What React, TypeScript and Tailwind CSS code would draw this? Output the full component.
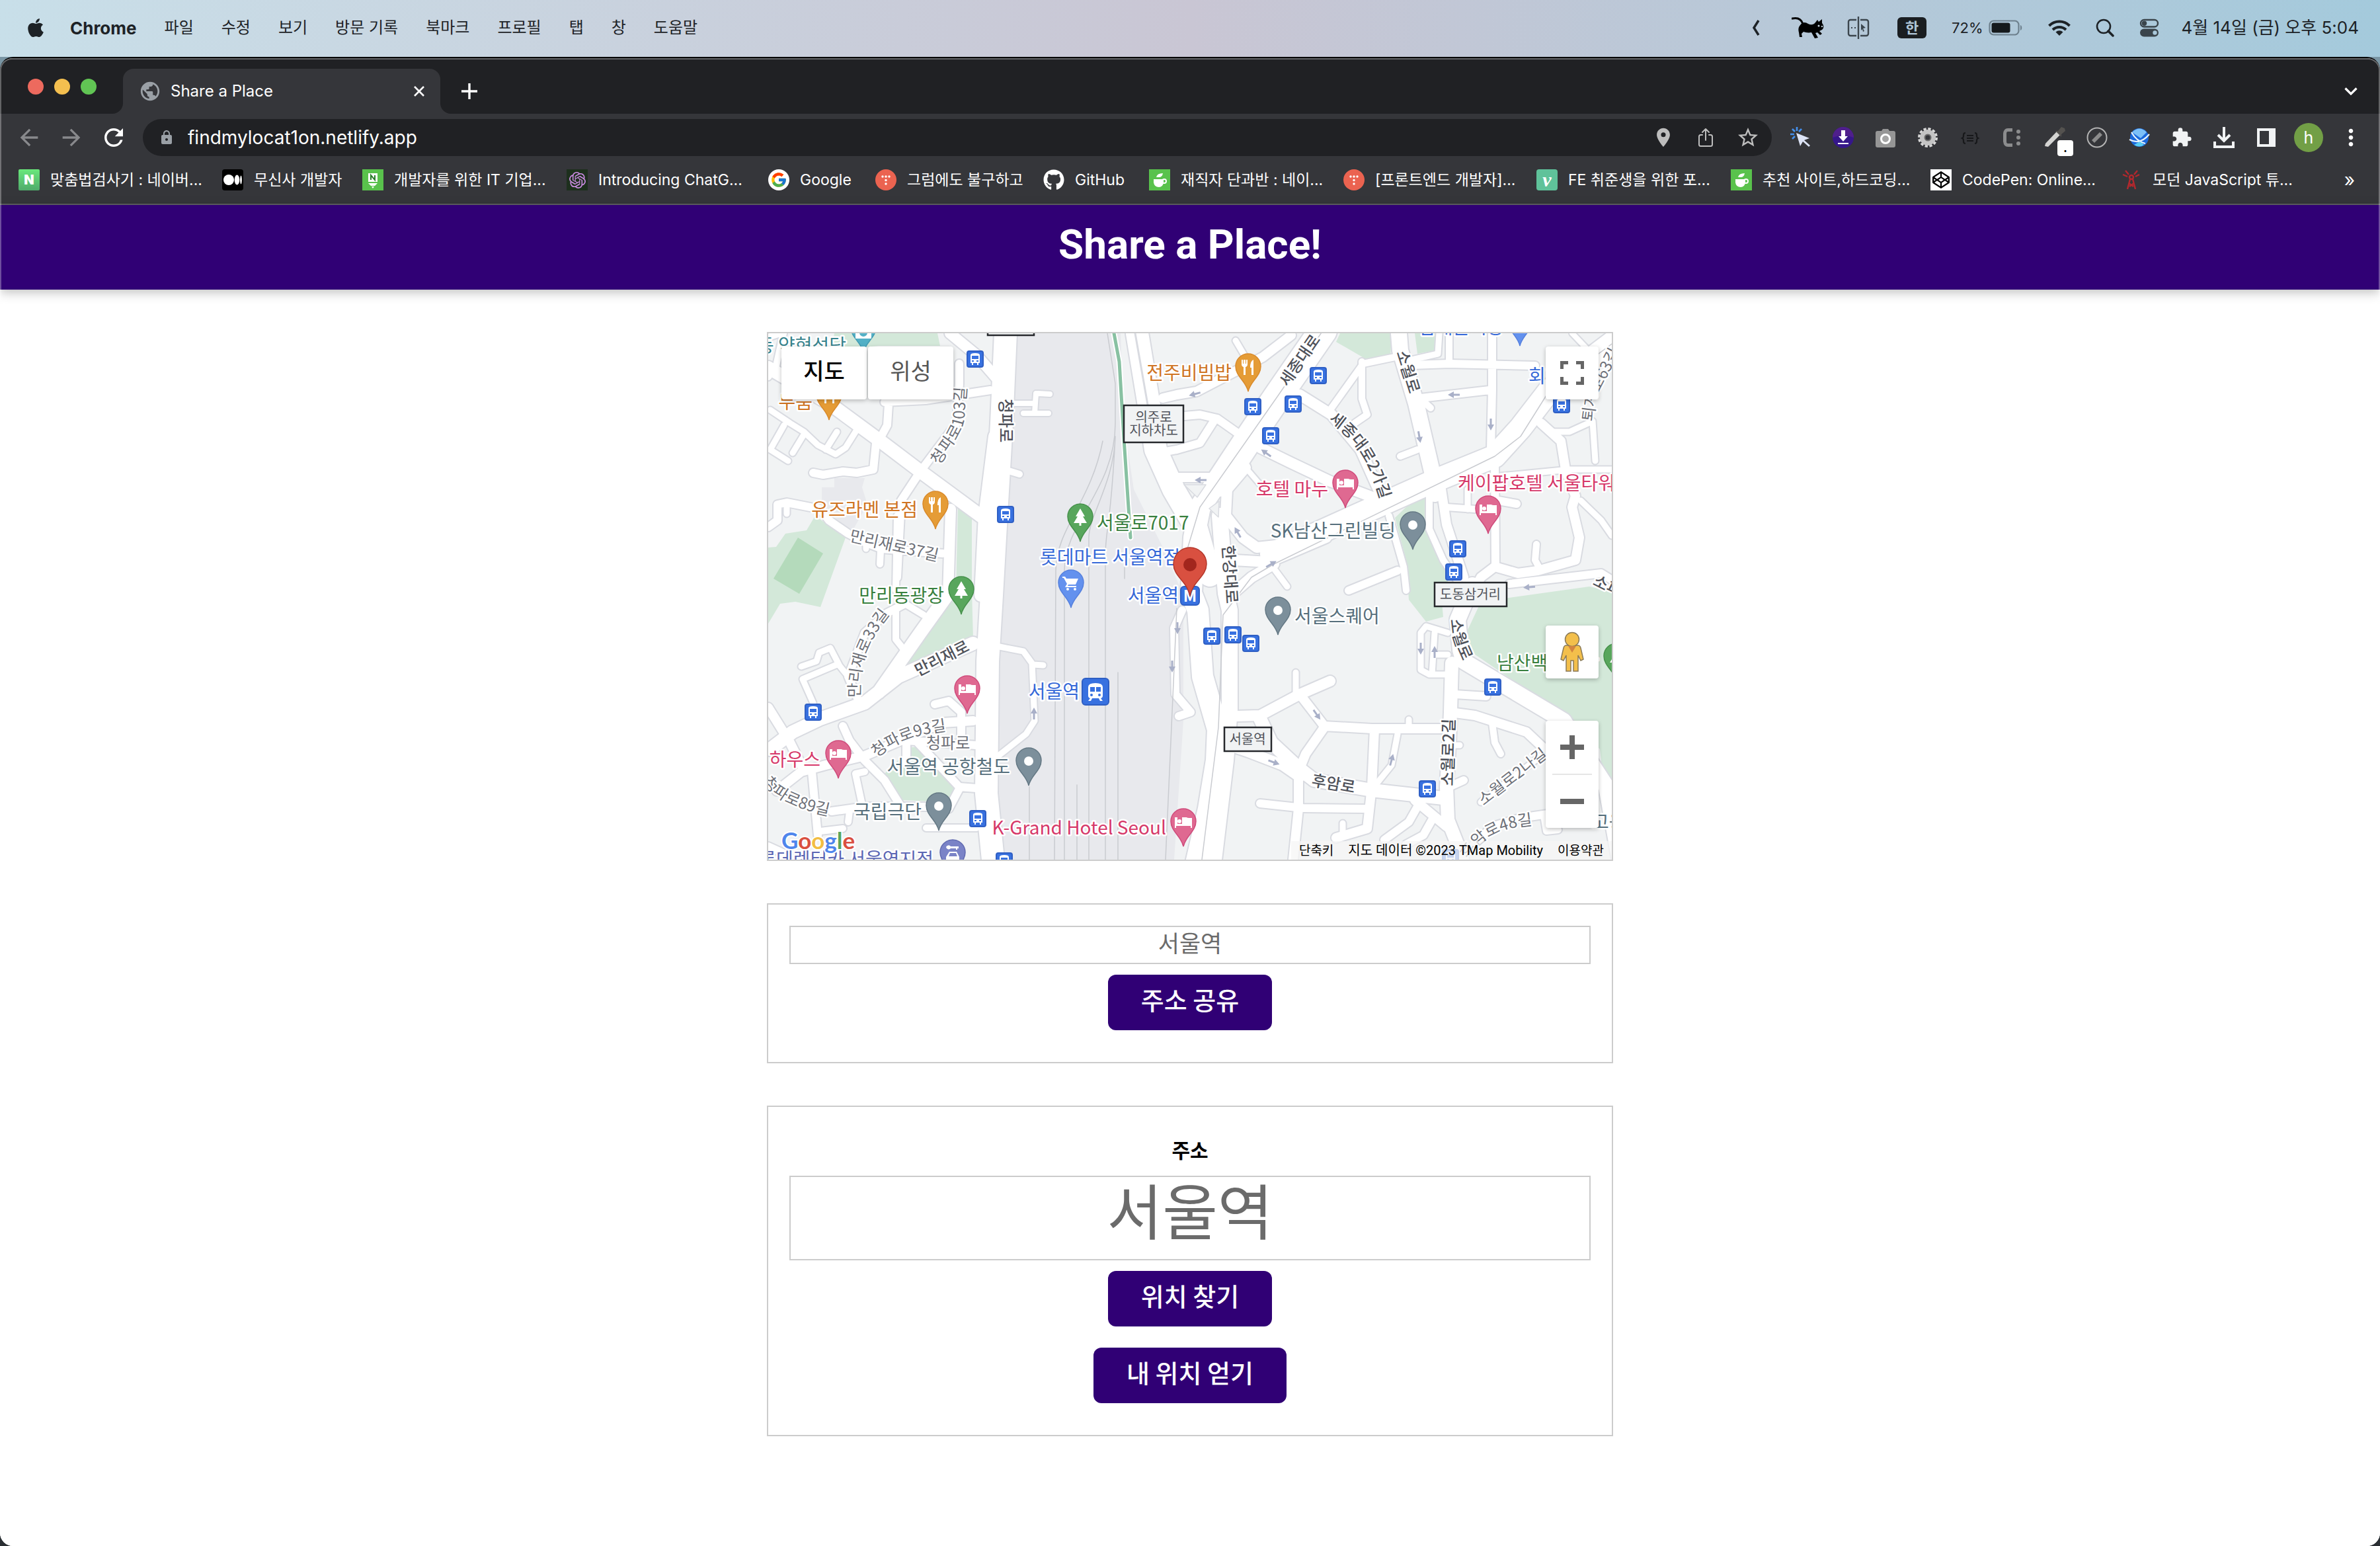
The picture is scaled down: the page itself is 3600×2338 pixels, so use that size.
import { ReactNode, useState } from "react";
import { FaApple, FaCodepen, FaGithub } from "react-icons/fa";
import { FcGoogle } from "react-icons/fc";
import { SiOpenai } from "react-icons/si";
import { IoShareOutline } from "react-icons/io5";
import {
  MdArrowBack,
  MdArrowForward,
  MdExtension,
  MdLocationOn,
  MdLock,
  MdMoreVert,
  MdPublic,
  MdRefresh,
  MdStarBorder,
} from "react-icons/md";

const MENUS = ["파일", "수정", "보기", "방문 기록", "북마크", "프로필", "탭", "창", "도움말"];

function MenuBar() {
  return (
    <header className="flex h-[86px] shrink-0 items-center justify-between bg-linear-to-r from-[#c8dfe9] via-[#c9c6d4] via-50% to-[#a4cadc] pr-[32px] pb-[2px] pl-[38px] text-[24px] text-[#1d2226]">
      <nav className="flex items-center gap-[42px]">
        <FaApple className="size-[32px]" />
        <span className="-ml-[6px] text-[26px] font-bold">Chrome</span>
        {MENUS.map((menu) => (
          <button key={menu} className="whitespace-nowrap">
            {menu}
          </button>
        ))}
      </nav>
      <div className="flex items-center">
        <svg className="h-[24px] w-[12px]" viewBox="0 0 12 24" fill="none" stroke="currentColor" strokeWidth="3.5">
          <path d="M10 1 3 12l7 11" />
        </svg>
        <CatIcon />
        <svg className="ml-[34px] h-[36px] w-[34px]" viewBox="0 0 34 36" fill="none" stroke="#3c464e" strokeWidth="2.4">
          <path d="M14 6H5a3 3 0 0 0-3 3v18a3 3 0 0 0 3 3h9M20 6h9a3 3 0 0 1 3 3v18a3 3 0 0 1-3 3h-9M17 1v34" />
          <path d="M21 12l7 6-4 1 2 4-2 1-1-4-2 2zM6 17h2v2H6zM11 17h2v2h-2z" fill="#3c464e" strokeWidth="0" />
        </svg>
        <span className="ml-[42px] flex h-[32px] w-[44px] items-center justify-center rounded-[6px] bg-[#1a1e21] text-[22px] leading-none font-bold text-[#b0c6d8]">
          한
        </span>
        <span className="ml-[38px] text-[22px]">72%</span>
        <svg className="ml-[8px] h-[26px] w-[52px]" viewBox="0 0 52 26">
          <rect x="1.5" y="2.5" width="44" height="21" rx="6" fill="none" stroke="#6d808d" strokeWidth="2.2" />
          <rect x="4.5" y="5.5" width="28" height="15" rx="3" fill="#15191c" />
          <path d="M48 9c3 1 3 7 0 8z" fill="#6d808d" />
        </svg>
        <svg className="ml-[38px] h-[26px] w-[34px]" viewBox="0 0 34 26" fill="none" stroke="currentColor" strokeWidth="4">
          <path d="M1.5 10a22 22 0 0 1 31 0M7 16a14.500 14.500 0 0 1 20 0" />
          <path d="M17 25l-5.500-5.500a8 8 0 0 1 11 0z" fill="currentColor" strokeWidth="0" />
        </svg>
        <svg className="ml-[38px] size-[28px]" viewBox="0 0 28 28" fill="none" stroke="currentColor" strokeWidth="2.6" strokeLinecap="round">
          <circle cx="12" cy="12" r="10" />
          <path d="M19 19l7 7" strokeWidth="3.5" />
        </svg>
        <svg className="ml-[38px] h-[28px] w-[30px]" viewBox="0 0 30 28" fill="none" stroke="#3a444b" strokeWidth="2.4">
          <rect x="2" y="2" width="26" height="10.5" rx="5.2" />
          <circle cx="7.5" cy="7.2" r="2.6" fill="#3a444b" />
          <rect x="1" y="15.5" width="28" height="12" rx="6" fill="#3a444b" strokeWidth="0" />
          <circle cx="23.5" cy="21.5" r="3.2" fill="#a9c8da" strokeWidth="0" />
        </svg>
        <span className="ml-[34px] text-[26px] leading-none whitespace-nowrap">4월 14일 (금) 오후 5:04</span>
      </div>
    </header>
  );
}

function CatIcon() {
  return (
    <svg className="ml-[48px] h-[34px] w-[50px]" viewBox="0 0 50 34">
      <path d="M1 3C10 1 15 5 17 11" fill="none" stroke="#000" strokeWidth="3" strokeLinecap="round" />
      <path d="M13 13c3-5 8-5 12-2 4 2 8 2 11-2l3-4 2 3 5-4v6c3 3 3 8 0 10l-4 2 4 4-3 2-4-4-3 1 4 7-5 1-5-9c-5 1-9 0-12-1l-3 3 1 5h-4l-1-7c-1-4-1-8 2-11z" fill="#000" />
      <circle cx="41" cy="14" r="1.5" fill="#c4d4e0" />
      <circle cx="46" cy="15" r="1.2" fill="#c4d4e0" />
    </svg>
  );
}

function TabStrip() {
  return (
    <div className="flex h-[82px] items-end bg-[#202124]">
      <div className="flex h-[82px] w-[186px] items-center gap-[16px] pl-[42px]">
        <button aria-label="닫기" className="size-[24px] rounded-full bg-[#ed6a5e]" />
        <button aria-label="최소화" className="size-[24px] rounded-full bg-[#f4bf4f]" />
        <button aria-label="확대" className="size-[24px] rounded-full bg-[#61c554]" />
      </div>
      <div className="relative flex h-[68px] w-[480px] items-center rounded-t-[16px] bg-[#35363a] pr-[24px] pl-[24px] text-white">
        <svg className="absolute bottom-0 -left-[16px] size-[16px]" viewBox="0 0 16 16" fill="#35363a">
          <path d="M16 0v16H0A16 16 0 0 0 16 0z" />
        </svg>
        <svg className="absolute -right-[16px] bottom-0 size-[16px]" viewBox="0 0 16 16" fill="#35363a">
          <path d="M0 0v16h16A16 16 0 0 1 0 0z" />
        </svg>
        <MdPublic className="size-[34px] text-[#9aa0a6]" />
        <span className="ml-[14px] flex-1 text-[24px]">Share a Place</span>
        <button aria-label="탭 닫기">
          <svg className="size-[16px]" viewBox="0 0 16 16" stroke="#fff" strokeWidth="2.6">
            <path d="M1 1l14 14M15 1L1 15" />
          </svg>
        </button>
      </div>
      <button aria-label="새 탭" className="ml-[32px] flex h-[68px] items-center">
        <svg className="size-[24px]" viewBox="0 0 24 24" stroke="#fff" strokeWidth="3.4">
          <path d="M12 0v24M0 12h24" />
        </svg>
      </button>
      <button aria-label="탭 검색" className="mr-[34px] ml-auto flex h-[68px] items-center">
        <svg className="h-[12px] w-[20px]" viewBox="0 0 20 12" fill="none" stroke="#fff" strokeWidth="3.2">
          <path d="M1.5 1.5L10 10l8.500-8.500" />
        </svg>
      </button>
    </div>
  );
}

function Extensions() {
  const icons: ReactNode[] = [
    <svg viewBox="0 0 32 32">
      <path d="M10 0v6M3 3l4 4M0 11h6M3 18l4-4M17 3l-4 4" stroke="#4591ee" strokeWidth="2.6" />
      <path d="M9 9l20 8-8 3 9 8-2 2-9-8-4 7z" fill="#dce3f5" />
    </svg>,
    <svg viewBox="0 0 32 32">
      <circle cx="16" cy="16" r="16" fill="#36178a" />
      <path d="M0 16a16 16 0 0 1 32 0q-16-6-32 0z" fill="#4f1f8c" />
      <path d="M13 5h6v9h4l-7 8-7-8h4zM8 24h16v2H8z" fill="#fff" />
    </svg>,
    <svg viewBox="0 0 32 32">
      <path d="M1 9q0-3 3-3h6l2-3h8l2 3h6q3 0 3 3v19q0 3-3 3H4q-3 0-3-3z" fill="#969696" />
      <circle cx="16" cy="18" r="6.5" fill="#a5a5a5" stroke="#fff" strokeWidth="3" />
    </svg>,
    <svg viewBox="0 0 32 32" fill="none">
      <circle cx="16" cy="16" r="13" stroke="#d8d8d8" strokeWidth="4" strokeDasharray="4.200 2.600" />
      <circle cx="16" cy="16" r="8.5" stroke="#c4c4c4" strokeWidth="7" />
      <circle cx="16" cy="16" r="4.5" stroke="#6d6d6d" strokeWidth="2" />
    </svg>,
    <svg viewBox="0 0 32 32" fill="none" stroke="#17181a" strokeWidth="2.2">
      <path d="M9 9q-3 0-3 3v2q0 2-2 3 2 1 2 3v2q0 3 3 3M23 9q3 0 3 3v2q0 2 2 3-2 1-2 3v2q0 3-3 3M11 13h10M11 17h10M11 21h10" />
    </svg>,
    <svg viewBox="0 0 32 32" fill="#8b8c8d">
      <path d="M16 2v5H9q-2 0-2 3v12q0 3 2 3h7v5H9q-6 0-7-8V10q1-8 7-8z" />
      <circle cx="25" cy="7" r="3" />
      <circle cx="25" cy="16" r="3" />
      <circle cx="25" cy="25" r="3" />
    </svg>,
    <span className="relative block size-[32px]">
      <svg viewBox="0 0 32 32">
        <path d="M19 7l5 5L6 30l-5-1 1-4z" fill="#d4d4d2" />
        <path d="M17 6l4 0 5-6 5 2 1 4-6 5v4z" fill="#54524f" />
      </svg>
      <span className="absolute top-[20px] left-[20px] flex size-[24px] items-center justify-center rounded-[4px] bg-white text-[18px] leading-none font-bold text-black">
        .
      </span>
    </span>,
    <svg viewBox="0 0 32 32">
      <circle cx="16" cy="16" r="14.5" fill="none" stroke="#b4b4b4" strokeWidth="2" />
      <path d="M8 20L20 8l4 4-12 12z" fill="#8c8c8c" />
    </svg>,
    <svg viewBox="0 0 32 32">
      <circle cx="16" cy="16" r="14" fill="#1b69dc" />
      <path d="M5 8q11-11 22 0l-9 9z" fill="#7cc0f8" />
      <path d="M1 19q16 9 30-8M4 8q8 14 21 17" fill="none" stroke="#e6f3fd" strokeWidth="2.2" />
      <path d="M8 27q8 5 15 0l-6-5z" fill="#59cdf4" />
    </svg>,
    <MdExtension className="size-[34px] text-[#f1f3f4]" />,
    <svg viewBox="0 0 32 32" fill="none" stroke="#f1f3f4" strokeWidth="4">
      <path d="M16 0v20M7 12l9 9 9-9M2 22v8h28v-8" />
    </svg>,
    <svg viewBox="0 0 32 32">
      <path d="M2 2h28v28H2zM6 6v20h14V6z" fill="#f1f3f4" fillRule="evenodd" />
    </svg>,
    <span className="-m-[6px] flex size-[44px] shrink-0 items-center justify-center rounded-full bg-[#729f46] text-[25px] leading-none text-white">
      h
    </span>,
    <MdMoreVert className="size-[40px] shrink-0 text-white" />,
  ];
  return (
    <div className="ml-[12px] flex items-center">
      {icons.map((icon, i) => (
        <button key={i} aria-label={`확장 ${i + 1}`} className="flex w-16 items-center justify-center">
          <span className="flex size-[32px] items-center justify-center">{icon}</span>
        </button>
      ))}
    </div>
  );
}

function Toolbar() {
  return (
    <div className="flex h-[72px] items-center bg-[#35363a] pr-[12px] pl-[12px] text-white">
      <button aria-label="뒤로" className="flex w-16 justify-center">
        <MdArrowBack className="size-[40px] text-[#88898c]" />
      </button>
      <button aria-label="앞으로" className="flex w-16 justify-center">
        <MdArrowForward className="size-[40px] text-[#88898c]" />
      </button>
      <button aria-label="새로고침" className="flex w-16 justify-center">
        <MdRefresh className="size-[42px]" />
      </button>
      <div className="ml-[12px] flex h-[56px] flex-1 items-center rounded-full bg-[#202124] pr-[4px] pl-[24px]">
        <MdLock className="size-[24px] text-[#9aa0a6]" />
        <input
          aria-label="주소창"
          defaultValue="findmylocat1on.netlify.app"
          className="ml-[20px] min-w-0 flex-1 bg-transparent text-[28px] outline-none"
        />
        <span className="flex w-16 justify-center">
          <MdLocationOn className="size-[34px] text-[#bdbdbd]" />
        </span>
        <span className="flex w-16 justify-center">
          <IoShareOutline className="size-[32px] text-[#bdbdbd]" />
        </span>
        <span className="flex w-16 justify-center">
          <MdStarBorder className="size-[36px] text-[#bdbdbd]" />
        </span>
      </div>
      <Extensions />
    </div>
  );
}

const CoffeeIcon = () => (
  <svg className="size-[32px]" viewBox="0 0 32 32">
    <path d="M0 0h32v32H0z" fill="#59c24c" />
    <path d="M7 15h15v5q-1 7-7 7-7 0-8-7zM11 12q1-6 10-6-1 6-6 6z" fill="#fff" />
    <circle cx="23" cy="18" r="3" fill="none" stroke="#fff" strokeWidth="2" />
  </svg>
);

const TistoryIcon = () => (
  <svg className="size-[32px]" viewBox="0 0 32 32">
    <circle cx="16" cy="16" r="16" fill="#eb6350" />
    <g fill="#fff">
      <circle cx="11" cy="11" r="1.7" />
      <circle cx="16" cy="11" r="1.7" />
      <circle cx="21" cy="11" r="1.7" />
      <circle cx="16" cy="16.5" r="1.7" />
      <circle cx="16" cy="22" r="1.7" />
    </g>
  </svg>
);

const BOOKMARKS = [
  {
    title: "맞춤법검사기 : 네이버...",
    width: "w-[308px]",
    icon: (
      <span className="flex size-[32px] items-center justify-center rounded-[2px] bg-linear-to-b from-[#69e87b] to-[#50ab6b] text-[20px] leading-none font-black">
        N
      </span>
    ),
  },
  {
    title: "무신사 개발자",
    width: "w-[212px]",
    icon: (
      <svg className="size-[32px]" viewBox="0 0 32 32">
        <rect width="32" height="32" rx="4" />
        <g fill="#fff">
          <circle cx="10" cy="16" r="8" />
          <ellipse cx="22.5" cy="16" rx="3.8" ry="7.5" />
          <ellipse cx="28.5" cy="16" rx="1.4" ry="6.5" />
        </g>
      </svg>
    ),
  },
  {
    title: "개발자를 위한 IT 기업...",
    width: "w-[309px]",
    icon: (
      <svg className="size-[32px]" viewBox="0 0 32 32">
        <path d="M0 0h32v32H0z" fill="#59c24c" />
        <path d="M9 6h14v13H9zM9 21h14l-4 4h-6zM14 26h4l-2 3z" fill="#fff" />
        <path d="M13 16V9l6 7V9" fill="none" stroke="#2d7d2d" strokeWidth="2" />
      </svg>
    ),
  },
  {
    title: "Introducing ChatG...",
    width: "w-[305px]",
    icon: (
      <span className="flex size-[32px] items-center justify-center bg-[#1d2f1d]">
        <SiOpenai className="size-[25px] text-[#c98be0]" />
      </span>
    ),
  },
  {
    title: "Google",
    width: "w-[162px]",
    icon: (
      <span className="flex size-[32px] items-center justify-center rounded-full bg-white">
        <FcGoogle className="size-[26px]" />
      </span>
    ),
  },
  { title: "그럼에도 불구하고", width: "w-[254px]", icon: <TistoryIcon /> },
  { title: "GitHub", width: "w-[160px]", icon: <FaGithub className="size-[32px]" /> },
  { title: "재직자 단과반 : 네이...", width: "w-[294px]", icon: <CoffeeIcon /> },
  { title: "[프론트엔드 개발자]...", width: "w-[292px]", icon: <TistoryIcon /> },
  {
    title: "FE 취준생을 위한 포...",
    width: "w-[294px]",
    icon: (
      <span className="flex size-[32px] items-center justify-center rounded-[4px] bg-[#5fc29a] font-['Liberation_Serif',serif] text-[30px] leading-none font-bold italic">
        v
      </span>
    ),
  },
  { title: "추천 사이트,하드코딩...", width: "w-[302px]", icon: <CoffeeIcon /> },
  {
    title: "CodePen: Online...",
    width: "w-[288px]",
    icon: (
      <span className="flex size-[32px] items-center justify-center bg-white">
        <FaCodepen className="size-[26px] text-black" />
      </span>
    ),
  },
  {
    title: "모던 JavaScript 튜...",
    width: "w-[300px]",
    icon: (
      <svg className="size-[32px]" viewBox="0 0 32 32" fill="none" stroke="#b3282d" strokeWidth="2.4">
        <circle cx="16" cy="12" r="3" />
        <path d="M14 15l-4 15M18 15l4 15M12 21l7 5M20 21l-7 5M12 8L7 2M20 8l5-6M10 11l-7-3M22 11l6-3" />
      </svg>
    ),
  },
];

function BookmarkBar() {
  return (
    <nav className="flex h-[64px] items-center bg-[#35363a] pr-[38px] pb-[8px] pl-[28px] text-[23px] text-white">
      {BOOKMARKS.map(({ title, width, icon }) => (
        <a key={title} href="#" className={`flex shrink-0 items-center gap-[16px] leading-none whitespace-nowrap ${width}`}>
          {icon}
          <span>{title}</span>
        </a>
      ))}
      <button aria-label="북마크 더보기" className="ml-auto text-[28px] leading-none">
        »
      </button>
    </nav>
  );
}

// Roads, grouped by stroke width. All map drawings share the viewBox of the map.
const ROADS: [number, string][] = [
  [8, "M1531 610H1565M1570 595L1588 596M1567 595L1565 625M1548 625H1586M2378 504L2400 527M1884 707L1908 735"],
  [
    9,
    "M1165 620L1195 640L1216 653L1237 673L1264 687L1279 677L1296 650M1216 657L1199 685M1186 643L1165 680L1192 697M1266 653L1249 680M1212 1008L1235 1000L1239 987L1256 980L1270 1007L1283 1023M1266 1005L1214 1027L1230 1063V1087M1512 978L1548 985L1561 1003L1565 1090L1552 1110L1510 1143M1563 1005L1578 1006M1869 515L1882 537M2131 545L2175 535L2177 504M2391 757L2422 787L2438 810M2344 653H2374L2409 637L2413 697M2270 720L2374 710H2438M2220 740V770M1927 860L1947 887M2190 957L2157 947L2149 957V1013L2162 1020H2188M2170 957L2166 1020M2170 990H2190M1960 1017V1047M2114 1110L2105 1157L2084 1183M2339 1137L2240 1213M2131 1088V1102M2031 1245V1262M2200 1127H2208M1190 765V777M1310 820V830",
  ],
  [
    10,
    "M1332 833L1331 853M1357 780L1355 893M1519 710L1542 717M1369 913L1397 930M1342 927L1355 920V967L1371 987M1308 1167L1294 1170L1304 1217M1285 1227L1283 1243M1241 1257L1275 1253M1401 1252H1477M2014 617L2062 550L2110 540M2060 547V603L2068 627L2049 640M2192 504V550M2153 607L2164 617M2118 690L2144 680M2162 747V800L2183 847L2214 893M2188 767L2231 770M2324 823L2322 847L2329 860M2101 780L2123 857L2127 893M2257 1093L2261 1123L2270 1140M2335 1233L2339 1257L2357 1255M1162 510L1180 504M1185 504L1174 553L1162 570",
  ],
  [
    12,
    "M1329 667L1342 643L1344 612M1338 608L1400 605L1498 590M1451 550V580L1447 640L1392 713L1363 757L1357 873M1230 715L1245 718L1275 713L1296 715L1321 710L1325 670M1162 797L1176 787V763L1190 760L1241 770L1254 787L1283 807L1308 820L1334 830L1426 837M1369 913L1342 927L1308 957L1283 1023L1300 1063M1414 1065L1435 1060L1454 1077V1123M1275 1098L1285 1120L1308 1150L1338 1180L1363 1220M1228 1167L1237 1263M1258 1227L1308 1220L1435 1220M1371 1153V1120L1477 1127M1388 1123L1451 1190L1477 1192M1451 1193L1435 1223M1788 923L1776 950L1778 1050L1801 1077L1783 1083M1780 630L1815 627L1841 633L1875 657M1836 637L1815 670L1780 680L1763 683M2136 552L2192 550L2322 553M2257 504V590L2255 680M2149 602L2253 590M2283 883L2422 867L2438 877M2261 693L2262 857M2266 757L2294 762M2040 893L2114 863M2201 1050L2248 1053M2192 1190L2214 1180M1906 1215L1971 1222L2066 1223M2144 1220L2131 1243L2094 1270M2166 1240L2153 1263L2127 1277M2348 1230L2300 1237L2257 1250L2227 1280M1162 1280L1195 1295",
  ],
  [
    14,
    "M1162 1070L1195 1123L1212 1157M1472 1090L1426 1093L1308 1143L1249 1157L1212 1167L1175 1196M1759 602L1780 597L1810 592L1910 540L1953 507M1780 722H1845M2331 640L2361 667L2368 710L2383 750L2378 767L2389 813L2383 847L2326 863L2296 867L2261 857L2240 873L2231 890M2179 733L2188 793L2214 873M2201 1078L2231 1082L2309 1107L2344 1140M1966 1050L1997 1090L2003 1098L2075 1102H2183M2003 1100L1975 1140L1964 1167V1223L1956 1300M2079 1103L2075 1190L2068 1253L2021 1267M2140 1210L2188 1250",
  ],
  [
    16,
    "M1438 770L1434 900M1437 504L1477 537L1510 575M1966 597L2014 627L2058 680L2088 747M1906 677L1953 700L2010 727L2079 753M1867 847L1919 850L2006 813M1927 853L1893 873L1862 900M1871 1083L1906 1082L1966 1050L2012 1030M1867 1130L1888 1137L1940 1157L1966 1175M1884 707L1856 740L1854 780L1880 813L1901 828L1930 825",
  ],
  [
    20,
    "M1472 973L1359 1023L1308 1063L1241 1087L1199 1107L1165 1133M1435 897L1392 957L1329 1047M1162 556L1254 610L1329 665L1395 715L1490 785M1505 660L1490 780L1484 900M1906 1087L1923 1123L1966 1163L1988 1180L2075 1195L2183 1207M2196 1003L2194 1077L2192 1123L2188 1190L2190 1240L2207 1283L2212 1300",
  ],
  [
    24,
    "M2116 504L2118 530L2142 610L2166 713L2170 747M2227 885L2205 937L2209 983L2214 1000L2365 1090L2430 1190L2450 1300M1845 780L1854 897L1860 923V1073L1854 1150L1836 1300",
  ],
  [
    34,
    "M1521 504L1515 640L1508 760L1500 900L1494 1000L1492 1200L1502 1300M1720 504L1738 613L1748 680L1775 740L1810 800L1830 870M2450 510L2344 590L2300 647L2261 690L2170 727L2058 777L1923 838",
  ],
  [32, "M1845 723L1815 767L1806 813L1802 897L1812 923L1819 1023L1842 1103L1840 1150L1828 1223L1808 1310"],
  [42, "M2001 500L1932 600L1888 665L1845 730"],
];

const RAILS =
  "M1668 667C1650 760 1597 800 1597 863L1595 1300M1687 580V640C1687 740 1610 790 1610 863V1300M1675 504L1687 580M1687 660C1685 730 1647 780 1647 813V1300M1687 660C1680 800 1672 800 1672 840V1300M1691 1017V1300M1557 1190V1300M1629 1187V1300M1701 830V875M1780 920L1763 1300M2001 500L1932 600L1815 767L1790 850M2438 520L2344 590L2300 660L2261 690L1927 853L1893 873L1850 930L1843 1100L1818 1300";

// x, y, rotation
const ARROWS: [number, number, number][] = [
  [1807, 596, 165],
  [1816, 726, 180],
  [2199, 597, 180],
  [2255, 642, 90],
  [2147, 661, 80],
  [1915, 685, 215],
  [1872, 805, 240],
  [1923, 853, -30],
  [2313, 888, 175],
  [1781, 950, 90],
  [1773, 1008, 90],
  [1564, 1079, -90],
  [2149, 981, 90],
  [2170, 986, -90],
  [1992, 1081, 55],
  [1927, 1153, 20],
  [2105, 1149, -75],
];

const BUSES: [number, number][] = [
  [1475, 543],
  [1521, 778],
  [1994, 568],
  [1956, 611],
  [1895, 615],
  [1922, 659],
  [2362, 612],
  [2205, 830],
  [2199, 865],
  [1833, 962],
  [1865, 960],
  [1892, 973],
  [2258, 1039],
  [2159, 1193],
  [1230, 1077],
  [1479, 1238],
  [1519, 1302],
  [2194, 1297],
];

type PinKind = "food" | "tree" | "bed" | "cart" | "dot" | "camera" | "car";

const PIN_COLORS: Record<PinKind, [string, string]> = {
  food: ["#e59c36", "#d98a2b"],
  tree: ["#58a65c", "#46904b"],
  bed: ["#df6991", "#cf4b7b"],
  cart: ["#6391ee", "#5580de"],
  dot: ["#7c8f9b", "#647884"],
  camera: ["#52b0c6", "#429cb3"],
  car: ["#7a83c7", "#6069b0"],
};

const PIN_GLYPHS: Record<PinKind, ReactNode> = {
  food: <path d="M-10 10v7q0 3 3 4v12h3V21q3-1 3-4v-7h-2v6h-1v-6h-3v6h-1v-6zM8 10q-5 2-5 12h2v11h3z" />,
  tree: <path d="M0 8l7 12H4l6 10H1.500v4h-3v-4H-10l6-10h-3z" />,
  bed: (
    <>
      <path d="M-13 14v16h2v-3h22v3h2V15h-2q-6 0-6-1h-7v10h-7V14z" />
      <circle cx="-6" cy="20" r="3" />
    </>
  ),
  cart: (
    <>
      <path d="M-13 11h4l2 3h18l-4 9h-11l-1 2h13v2h-17l3-5-5-9h-2z" />
      <circle cx="-5" cy="30" r="2" />
      <circle cx="6" cy="30" r="2" />
    </>
  ),
  dot: <circle cx="0" cy="21" r="7" />,
  camera: (
    <path fillRule="evenodd" d="M-12 20h6l2-4h10l2 4h4v17h-24zM6 28a6 6 0 1 0-12 0 6 6 0 1 0 12 0M-9 10h2v3h3v2h-3v3h-2v-3h-3v-2h3z" />
  ),
  car: (
    <path fillRule="evenodd" d="M-10 12a4 4 0 0 1 7-1h12v3h-2v2h-2v-2h-8a4 4 0 0 1-7-2M-5 19h11l4 8v10h-20V27zM-4 21l-2 5h13l-2-5z" />
  ),
};

// x, top, kind
const PINS: [number, number, PinKind][] = [
  [1306, 475, "camera"],
  [1254, 577, "food"],
  [1415, 742, "food"],
  [1888, 534, "food"],
  [1634, 761, "tree"],
  [1454, 871, "tree"],
  [2445, 972, "tree"],
  [1620, 861, "cart"],
  [2299, 465, "cart"],
  [2035, 710, "bed"],
  [2251, 749, "bed"],
  [1463, 1021, "bed"],
  [1268, 1119, "bed"],
  [1790, 1222, "bed"],
  [2137, 773, "dot"],
  [1933, 902, "dot"],
  [1556, 1130, "dot"],
  [1420, 1198, "dot"],
  [1441, 1269, "car"],
];

// text, x, baseline, colour, anchor
const PLACES: [string, number, number, string, "start" | "end"][] = [
  ["동 약현성당", 1280, 533, "#37838d", "end"],
  ["두품", 1229, 618, "#cf7423", "end"],
  ["전주비빔밥", 1863, 574, "#cf7423", "end"],
  ["유즈라멘 본점", 1388, 781, "#cf7423", "end"],
  ["만리동광장", 1428, 911, "#38803e", "end"],
  ["서울로7017", 1659, 801, "#38803e", "start"],
  ["남산백범광장", 2264, 1013, "#38803e", "start"],
  ["롯데마트 서울역점", 1573, 853, "#3568d8", "start"],
  ["서울역", 1783, 911, "#3568d8", "end"],
  ["서울역", 1633, 1056, "#3568d8", "end"],
  ["회현", 2312, 579, "#3568d8", "start"],
  ["남대문시장", 2146, 505, "#3568d8", "start"],
  ["호텔 마누", 2009, 750, "#d63869", "end"],
  ["케이팝호텔 서울타워", 2205, 741, "#d63869", "start"],
  ["하우스", 1241, 1159, "#d63869", "end"],
  ["K-Grand Hotel Seoul", 1764, 1262, "#d63869", "end"],
  ["SK남산그린빌딩", 2111, 813, "#566f7c", "end"],
  ["서울스퀘어", 1958, 942, "#566f7c", "start"],
  ["서울역 공항철도", 1528, 1170, "#566f7c", "end"],
  ["국립극단", 1394, 1238, "#566f7c", "end"],
  ["고용노동부", 2408, 1253, "#566f7c", "start"],
  ["롯데렌터카 서울역지점", 1412, 1310, "#5b66b4", "end"],
];

// text, path of the baseline, colour
const STREETS: [string, string, string][] = [
  ["청파로103길", "M1421 704L1438 677Q1458 650 1459 630L1464 560", "#6d7078"],
  ["청파로", "M1513 603V700", "#4f525a"],
  ["만리재로37길", "M1284 818L1450 856", "#6d7078"],
  ["만리재로33길", "M1301 1055Q1299 1010 1318 972T1360 915", "#6d7078"],
  ["만리재로", "M1389 1023L1480 977", "#4f525a"],
  ["청파로93길", "M1326 1146Q1370 1108 1450 1104", "#6d7078"],
  ["청파로", "M1401 1132H1500", "#6d7078"],
  ["청파로89길", "M1154 1182Q1175 1224 1290 1240", "#6d7078"],
  ["세종대로", "M1948 586L2010 496", "#4f525a"],
  ["소월로", "M2112 533L2150 655", "#4f525a"],
  ["세종대로2가길", "M2009 636Q2045 660 2066 700T2096 790", "#4f525a"],
  ["한강대로", "M1849 825L1856 930", "#4f525a"],
  ["소월로", "M2195 937Q2193 965 2223 1020", "#4f525a"],
  ["퇴계로63길", "M2410 638L2415 600L2462 510", "#6d7078"],
  ["소파로", "M2408 884L2480 920", "#4f525a"],
  ["후암로", "M1983 1188L2080 1205", "#4f525a"],
  ["소월로2길", "M2198 1189L2201 1060", "#4f525a"],
  ["소월로2나길", "M2244 1219L2360 1130", "#6d7078"],
  ["후암로48길", "M2222 1300Q2245 1250 2330 1247", "#6d7078"],
];

function MapDrawing() {
  return (
    <svg
      className="absolute inset-0 size-full font-['Noto_Sans_CJK_KR',sans-serif]"
      viewBox="1162 504 1276 796"
      preserveAspectRatio="xMidYMid slice"
      role="img"
      aria-label="서울역 주변 지도"
    >
      <path d="M1162 504h1276v796H1162z" fill="#f1f3f4" />
      <path
        d="M1531 504H1695L1700 640 1715 740 1760 830 1790 900V1090L1776 1300H1520L1508 1180 1512 900 1530 680z"
        fill="#e8e9ed"
      />
      <path d="M1262 723H1308L1304 737 1312 763 1287 807 1243 763V737H1262z" fill="#e8e9ed" />
      <g fill="#d3e8d9">
        <path d="M1162 828L1174 827 1188 807 1220 802 1233 780 1279 813 1241 918 1203 910 1180 913 1162 943z" />
        <path d="M1449 767L1470 780V893L1472 967 1392 1000 1357 1020 1430 907 1446 893z" />
        <path d="M1338 1170L1378 1130H1392L1451 1193 1435 1213 1363 1210z" />
        <path d="M1262 504H1418L1422 523H1329L1258 530z" />
        <path d="M2027 504H2105L2103 543H2066L2021 517zM2140 504H2172L2170 530 2144 535z" />
        <path d="M2110 783L2131 763 2157 753 2162 807 2196 867 2180 900 2183 933 2157 940 2131 907 2127 847z" />
        <path d="M2240 910L2404 887 2438 895V1215L2426 1187 2420 1133 2378 1090 2227 987 2218 957z" />
      </g>
      <path d="M1207 813L1245 837 1209 898 1170 875z" fill="#b4dabb" />
      <g fill="none" strokeLinecap="round" strokeLinejoin="round">
        {ROADS.map(([width, d]) => (
          <path key={width} d={d} stroke="#d9dbe1" strokeWidth={width + 4} />
        ))}
        {ROADS.map(([width, d]) => (
          <path key={width} d={d} stroke="#fff" strokeWidth={width} />
        ))}
        <path d="M1717 504L1736 612" stroke="#d9dbe1" strokeWidth="3" />
        <path
          d="M1791 733H1824L1811 752zM1829 769L1844 758 1843 782z"
          fill="#f1f3f4"
          stroke="#d9dbe1"
          strokeWidth="1.5"
        />
        <path d={RAILS} stroke="#c9cbd0" strokeWidth="1.5" />
        <path d="M1685 504L1693 547 1700 663 1710 813" stroke="#fff" strokeWidth="9" />
        <path d="M1685 504L1693 547 1700 663 1710 813" stroke="#88c1a2" strokeWidth="5" />
      </g>
      {ARROWS.map(([x, y, turn]) => (
        <path
          key={`${x}-${y}`}
          transform={`translate(${x} ${y}) rotate(${turn})`}
          d="M-9-1.500H0V-5L9 0 0 5V1.500H-9z"
          fill="#a9b0c8"
        />
      ))}
      <g fontSize="24" stroke="#fff" strokeWidth="5" strokeLinejoin="round" paintOrder="stroke">
        {STREETS.map(([text, d, fill], i) => (
          <g key={i}>
            <path id={`street-${i}`} d={d} fill="none" stroke="none" />
            <text fill={fill} fontWeight={fill === "#4f525a" ? 500 : 400}>
              <textPath href={`#street-${i}`}>{text}</textPath>
            </text>
          </g>
        ))}
      </g>
      <g fill="#f1f3f4" stroke="#26282c" strokeWidth="2.5">
        <rect x="1494" y="480" width="70" height="27" />
        <rect x="1700" y="613" width="90" height="56" />
        <rect x="2170" y="881" width="109" height="36" />
        <rect x="1852" y="1100" width="71" height="36" />
      </g>
      <g fontSize="20" fill="#4f525a" textAnchor="middle">
        <text x="1745" y="638">의주로</text>
        <text x="1745" y="658">지하차도</text>
        <text x="2224" y="906">도동삼거리</text>
        <text x="1887" y="1125">서울역</text>
      </g>
      {BUSES.map(([x, y]) => (
        <g key={`${x}-${y}`} transform={`translate(${x} ${y})`}>
          <rect x="-12" y="-12" width="24" height="24" rx="3" fill="#3871e0" stroke="#2f5fc4" strokeWidth="2" />
          <path d="M-7-6q0-3 7-3t7 3V6H5v3H3V6h-6v3h-2V6h-2z" fill="#fff" />
          <path d="M-5-5H5v5H-5zM-5 2h3v2h-3zM2 2h3v2H2z" fill="#3871e0" />
        </g>
      ))}
      <g transform="translate(1657 1046)">
        <rect x="-20" y="-20" width="40" height="40" rx="5" fill="#3871e0" stroke="#2f5fc4" strokeWidth="2" />
        <path d="M-11-7q0-6 11-6t11 6V6q0 3-3 4l3 4H7L5 10H-5l-2 4h-4l3-4q-3-1-3-4z" fill="#fff" />
        <path d="M-8-7h7v7h-7zM1-7h7v7H1z" fill="#3871e0" />
        <circle cx="-6" cy="5" r="2" fill="#3871e0" />
        <circle cx="6" cy="5" r="2" fill="#3871e0" />
      </g>
      {PINS.map(([x, y, kind]) => (
        <g key={`${x}-${y}`} transform={`translate(${x} ${y})`}>
          <path
            d="M0 58C-3 43-19 35-19 20A19 19 0 1 1 19 20C19 35 3 43 0 58Z"
            fill={PIN_COLORS[kind][0]}
            stroke={PIN_COLORS[kind][1]}
            strokeWidth="1.5"
          />
          <g fill="#fff">{PIN_GLYPHS[kind]}</g>
        </g>
      ))}
      <g fontSize="28" stroke="#fff" strokeWidth="5" strokeLinejoin="round" paintOrder="stroke">
        {PLACES.map(([text, x, y, fill, anchor], i) => (
          <text key={i} x={x} y={y} fill={fill} textAnchor={anchor}>
            {text}
          </text>
        ))}
      </g>
      <rect x="1786" y="887" width="28" height="28" rx="5" fill="#3871e0" stroke="#2f5fc4" strokeWidth="2" />
      <text x="1800" y="910" fontSize="24" fontWeight="700" fill="#fff" textAnchor="middle">
        M
      </text>
      <path
        d="M1800 902C1797 880 1775 872 1775 853A25 25 0 1 1 1825 853C1825 872 1803 880 1800 902Z"
        fill="#d95040"
        stroke="#b3362a"
        strokeWidth="1.5"
      />
      <circle cx="1800" cy="854" r="10" fill="#a2261d" />
      <text
        x="1182"
        y="1284"
        className="font-[Lato,sans-serif]"
        fontSize="35"
        fontWeight="700"
        stroke="#fff"
        strokeWidth="4"
        paintOrder="stroke"
      >
        <tspan fill="#4f86ec">G</tspan>
        <tspan fill="#d95040">o</tspan>
        <tspan fill="#f2bd42">o</tspan>
        <tspan fill="#4f86ec">g</tspan>
        <tspan fill="#58a65c">l</tspan>
        <tspan fill="#d95040">e</tspan>
      </text>
    </svg>
  );
}

function MapView() {
  const [type, setType] = useState("지도");

  return (
    <section className="relative h-[800px] overflow-hidden border-2 border-[#ccc]">
      <MapDrawing />
      <div className="absolute top-[20px] left-[20px] flex gap-[2px] text-[34px] leading-none">
        {["지도", "위성"].map((name) => (
          <button
            key={name}
            onClick={() => setType(name)}
            className={`h-[80px] w-[129px] rounded-[4px] bg-white pb-[8px] shadow-[0_2px_6px_rgba(0,0,0,0.25)] ${
              type === name ? "font-medium text-black" : "text-[#565656]"
            }`}
          >
            {name}
          </button>
        ))}
      </div>
      <button
        aria-label="전체화면"
        className="absolute top-[20px] right-[20px] flex size-[80px] items-center justify-center rounded-[4px] bg-white shadow-[0_2px_6px_rgba(0,0,0,0.25)]"
      >
        <svg className="size-[36px]" viewBox="0 0 36 36" fill="none" stroke="#666" strokeWidth="5">
          <path d="M2.500 12V2.500H12M24 2.500h9.500V12M33.500 24v9.500H24M12 33.500H2.500V24" />
        </svg>
      </button>
      <button
        aria-label="거리뷰"
        className="absolute right-[20px] bottom-[274px] flex size-[80px] items-center justify-center rounded-[4px] bg-white shadow-[0_2px_6px_rgba(0,0,0,0.25)]"
      >
        <svg className="h-[62px] w-[36px]" viewBox="0 0 36 62" fill="#f3bf4b" stroke="#8a7a58" strokeWidth="1.5">
          <path d="M9 21h18q3 0 4 4l4 17-4 2-4-8v24h-7V44h-4v16H9V36l-4 8-4-2 4-17q1-4 4-4z" />
          <circle cx="18" cy="12" r="10.5" />
          <path d="M12 22h12l-6 10z" fill="#d3843f" stroke="none" />
        </svg>
      </button>
      <div className="absolute right-[20px] bottom-[48px] flex h-[162px] w-[80px] flex-col items-center rounded-[4px] bg-white shadow-[0_2px_6px_rgba(0,0,0,0.25)]">
        <button aria-label="확대" className="flex h-[80px] w-full items-center justify-center">
          <svg className="size-[36px]" viewBox="0 0 36 36" fill="#666">
            <path d="M14 0h8v14h14v8H22v14h-8V22H0v-8h14z" />
          </svg>
        </button>
        <div className="h-[2px] w-[60px] bg-[#e6e6e6]" />
        <button aria-label="축소" className="flex h-[80px] w-full items-center justify-center">
          <svg className="size-[36px]" viewBox="0 0 36 36" fill="#666">
            <path d="M0 14h36v8H0z" />
          </svg>
        </button>
      </div>
      <div className="absolute right-0 bottom-0 flex h-[28px] items-center gap-[22px] bg-[#f5f5f5]/75 pr-[12px] pl-[12px] font-[Roboto,'Noto_Sans_CJK_KR',sans-serif] text-[19px] leading-none whitespace-nowrap text-black">
        <button>단축키</button>
        <span className="text-[20px]">지도 데이터 ©2023 TMap Mobility</span>
        <a href="#">이용약관</a>
      </div>
    </section>
  );
}

const buttonStyle =
  "my-[16px] h-[84px] rounded-[12px] bg-[#300075] px-[50px] pb-[10px] text-[38px] leading-none font-medium text-white";

export default function App() {
  const [address, setAddress] = useState("서울역");

  return (
    <div className="flex min-h-screen flex-col bg-linear-to-b from-[#7d9aa9] to-[#2a2f33] font-[Inter,'Noto_Sans_CJK_KR',sans-serif]">
      <MenuBar />
      <div className="relative flex flex-1 flex-col overflow-hidden rounded-[20px] border-t-2 border-black bg-white">
        <div className="h-[2px] bg-[#202124]" />
        <TabStrip />
        <Toolbar />
        <BookmarkBar />
        <div className="flex-1 border-t-2 border-[#5f6063] bg-white font-['Noto_Sans_CJK_KR',sans-serif]">
          <header className="flex h-[128px] items-center justify-center bg-[#300075] pb-[8px] shadow-[0_4px_16px_rgba(0,0,0,0.26)]">
            <h1 className="font-[Roboto,sans-serif] text-[62px] leading-none font-bold text-white">Share a Place!</h1>
          </header>
          <main className="mx-auto mt-[64px] flex w-full max-w-[1280px] flex-col gap-[64px] text-center">
            <MapView />
            <section className="border-2 border-[#ccc] p-[32px]">
              <input
                aria-label="공유할 주소"
                readOnly
                value={address}
                className="block h-[58px] w-full border-2 border-[#ccc] pb-[10px] text-center text-[35px] leading-none text-[#6b6b6b]"
              />
              <button className={buttonStyle}>주소 공유</button>
            </section>
            <section className="border-2 border-[#ccc] p-[32px]">
              <form className="flex flex-col items-center" onSubmit={(e) => e.preventDefault()}>
                <label htmlFor="address" className="h-[72px] text-[30px] leading-[64px] font-bold text-black">
                  주소
                </label>
                <input
                  id="address"
                  value={address}
                  onChange={(e) => setAddress(e.target.value)}
                  className="block h-[128px] w-full border-2 border-[#ccc] pb-[30px] text-center text-[91px] leading-none text-[#6b6b6b]"
                />
                <button type="submit" className={buttonStyle}>
                  위치 찾기
                </button>
                <button type="button" className={buttonStyle}>
                  내 위치 얻기
                </button>
              </form>
            </section>
          </main>
        </div>
        {/* light rim of the window */}
        <div className="pointer-events-none absolute inset-0 rounded-[18px] border-2 border-white/30" />
      </div>
    </div>
  );
}
